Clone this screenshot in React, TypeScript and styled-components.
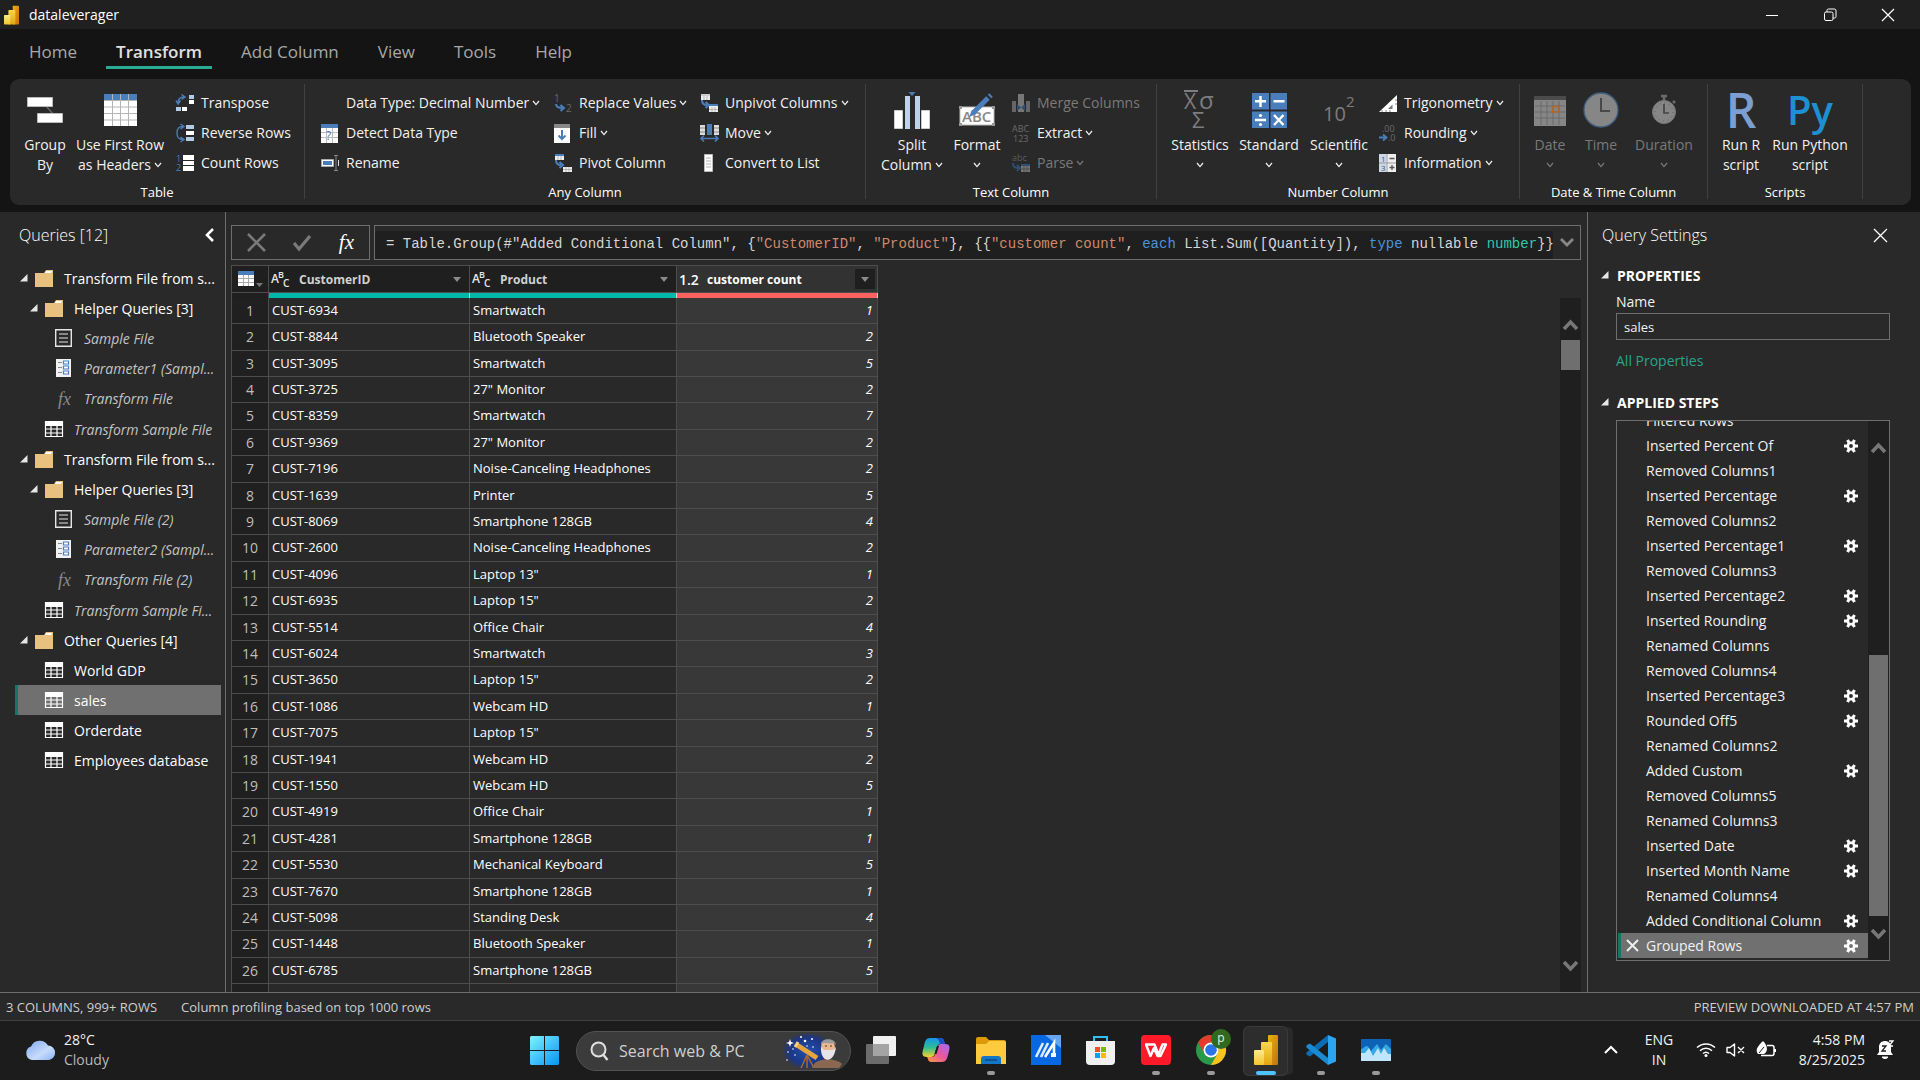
import React from "react";
import styled, { createGlobalStyle } from "styled-components";

const sans = `"Open Sans", "Noto Sans", sans-serif`;
const c = {
  black: "#141414",
  panel: "#292929",
  dark: "#1f1f1f",
  line: "#6e6e6e",
  grid: "#4d4d4d",
  text: "#f2f2f2",
  muted: "#7a7a7a",
  teal: "#01b8aa",
  red: "#fd625e",
  blue: "#4a7ebb",
  selected: "#707070",
  accent: "#117865",
};

const GlobalStyle = createGlobalStyle`
  *, *::before, *::after { box-sizing: border-box; }
  body { margin: 0; background: ${c.black}; font-family: ${sans}; color: ${c.text}; overflow: hidden; }
  button, input { font: inherit; color: inherit; }
  button { border: 0; padding: 0; background: none; cursor: default; }
  svg { display: block; flex: none; overflow: visible; }
`;

const Window = styled.div`
  display: flex;
  flex-direction: column;
  height: 100vh;
`;

/* ---------- title bar and tabs ---------- */

const TitleBar = styled.header`
  display: flex;
  align-items: center;
  gap: 10px;
  height: 29px;
  padding: 0 25px 0 4px;
  background: #202020;
  font-size: 14px;
  color: #fff;
`;
const WindowButtons = styled.div`
  display: flex;
  gap: 44px;
  margin-left: auto;
`;
const Tabs = styled.nav`
  display: flex;
  gap: 19px;
  height: 50px;
  padding: 8px 19px 0;
`;
const Tab = styled.button<{ $on?: boolean }>`
  height: 32px;
  padding: 0 10px;
  font-size: 17px;
  line-height: 30px;
  font-weight: ${(p) => (p.$on ? 600 : 400)};
  color: ${(p) => (p.$on ? "#e0e0e0" : "#a8a8a8")};
  border-bottom: 3px solid ${(p) => (p.$on ? "#2bab94" : "transparent")};
`;

/* ---------- ribbon ---------- */

const Ribbon = styled.section`
  display: flex;
  height: 126px;
  margin: 0 9px 7px 10px;
  padding: 5px 0 6px;
  border-radius: 9px;
  background: ${c.panel};
`;
const Group = styled.div`
  display: flex;
  flex-direction: column;
  border-right: 1px solid #404040;
`;
const GroupBody = styled.div<{ $pad: number }>`
  display: flex;
  flex: none;
  height: 96px;
  padding: 4px 0 0 ${(p) => p.$pad}px;
`;
const GroupTitle = styled.div`
  text-align: center;
  font-size: 13px;
  line-height: 14px;
  padding-top: 5px;
  color: #fff;
`;
const BigButton = styled.button<{ $w: number; $off?: boolean }>`
  display: flex;
  flex-direction: column;
  align-items: center;
  width: ${(p) => p.$w}px;
  padding-top: 3px;
  font-size: 14px;
  line-height: 20px;
  white-space: nowrap;
  color: ${(p) => (p.$off ? c.muted : c.text)};
`;
const BigIcon = styled.span`
  display: flex;
  align-items: center;
  justify-content: center;
  height: 38px;
  margin-bottom: 6px;
`;
const LabelLine = styled.span`
  display: flex;
  align-items: center;
  gap: 3px;
  height: 20px;
`;
const SmallColumn = styled.div<{ $w: number; $pad?: number }>`
  width: ${(p) => p.$w}px;
  padding-left: ${(p) => p.$pad || 0}px;
`;
const SmallButton = styled.button<{ $off?: boolean }>`
  display: flex;
  align-items: center;
  height: 30px;
  font-size: 14px;
  line-height: 20px;
  white-space: nowrap;
  color: ${(p) => (p.$off ? c.muted : c.text)};
`;
const SmallIcon = styled.span`
  width: 25px;
`;
const Letters = styled.span<{ $color: string; $size: number; $weight?: number }>`
  font-family: ${sans};
  font-size: ${(p) => p.$size}px;
  font-weight: ${(p) => p.$weight || 400};
  line-height: 38px;
  color: ${(p) => p.$color};
`;

/* ---------- workspace ---------- */

const Workspace = styled.main`
  display: flex;
  flex: 1;
  min-height: 0;
  background: ${c.panel};
`;
const QueriesPane = styled.aside`
  flex: none;
  width: 226px;
  border-right: 1px solid ${c.line};
`;
const PaneHead = styled.div<{ $left: number; $right: number }>`
  display: flex;
  align-items: center;
  justify-content: space-between;
  height: 46px;
  margin-bottom: 2px;
  padding: 0 ${(p) => p.$right}px 0 ${(p) => p.$left}px;
`;
const PaneTitle = styled.h2`
  margin: 0;
  font-size: 16px;
  font-weight: 300;
  color: #fff;
`;
const Tree = styled.ul`
  list-style: none;
  margin: 0 4px 0 15px;
  padding: 3px 0 0;
`;
const TreeRow = styled.li<{ $level: number; $on?: boolean; $dim?: boolean; $fn?: boolean }>`
  display: grid;
  grid-template-columns: 15px 19px 1fr;
  align-items: center;
  height: ${(p) => (p.$fn ? 31 : 30)}px;
  padding-left: ${(p) => 2 + p.$level * 10}px;
  border-left: 3px solid ${(p) => (p.$on ? c.accent : "transparent")};
  background: ${(p) => (p.$on ? c.selected : "none")};
  color: ${(p) => (p.$dim ? "#c4c4c4" : "#fff")};
  font-style: ${(p) => (p.$dim ? "italic" : "normal")};
  font-size: 14px;
`;
const TreeName = styled.span`
  padding-left: 10px;
  white-space: nowrap;
`;

const Center = styled.section`
  display: flex;
  flex: 1;
  flex-direction: column;
  min-width: 0;
  padding: 13px 6px 0 5px;
`;
const FormulaRow = styled.div`
  display: flex;
  gap: 4px;
  height: 35px;
  margin-bottom: 5px;
`;
const FormulaTools = styled.div`
  display: flex;
  align-items: center;
  justify-content: space-between;
  width: 139px;
  padding: 0 15px;
  border: 1px solid ${c.line};
`;
const FormulaBox = styled.div`
  display: flex;
  flex: 1;
  min-width: 0;
  border: 1px solid ${c.line};
`;
const FormulaText = styled.div`
  flex: 1;
  margin-top: 5px;
  padding-left: 11px;
  overflow: hidden;
  background: ${c.dark};
  font: 14px/26px "Liberation Mono", monospace;
  white-space: pre;
  color: #d6d6d6;
  outline: 0;
`;
const Token = styled.span<{ $color: string }>`
  color: ${(p) => p.$color};
`;
const ExpandButton = styled.button`
  display: grid;
  place-items: center;
  width: 27px;
`;
const GridArea = styled.div`
  display: flex;
  flex: 1;
  justify-content: space-between;
  min-height: 0;
`;
const GridClip = styled.div`
  overflow: hidden;
`;
const Table = styled.table`
  border-collapse: separate;
  border-spacing: 0;
  table-layout: fixed;
  width: 647px;
  border-top: 1px solid ${c.grid};
  border-left: 1px solid ${c.grid};
  font-size: 13px;
  font-weight: 500;
`;
const Head = styled.th<{ $w: number; $on?: boolean }>`
  width: ${(p) => p.$w}px;
  height: 27px;
  padding: 0 2px;
  border-right: 1px solid ${c.grid};
  border-bottom: 1px solid ${c.grid};
  background: ${(p) => (p.$on ? "#323232" : c.dark)};
  color: ${(p) => (p.$on ? "#fff" : "#d0d0d0")};
  font-size: 12px;
  text-align: left;
`;
const HeadInner = styled.div`
  display: flex;
  align-items: center;
  gap: 8px;
`;
const FilterButton = styled.button<{ $on?: boolean }>`
  display: grid;
  place-items: center;
  width: 20px;
  height: 20px;
  margin-left: auto;
  background: ${(p) => (p.$on ? c.dark : "none")};
`;
const Quality = styled.td<{ $color: string }>`
  height: 5px;
  padding: 0;
  background: ${(p) => p.$color};
  border-right: 1px solid #d0d0d0;
  &:first-child { border-right-color: ${c.grid}; }
`;
const BodyRow = styled.tr`
  height: 26px;
  &:nth-child(5n + 1), &:nth-child(5n + 3) { height: 27px; }
`;
const Cell = styled.td<{ $num?: boolean }>`
  padding: 0 4px 2px 3px;
  border-right: 1px solid ${c.grid};
  border-bottom: 1px solid ${c.grid};
  background: ${(p) => (p.$num ? "#383838" : c.panel)};
  font-style: ${(p) => (p.$num ? "italic" : "normal")};
  text-align: ${(p) => (p.$num ? "right" : "left")};
  line-height: 16px;
  color: #fff;
`;
const RowNumber = styled.th`
  padding: 0;
  border-right: 1px solid ${c.grid};
  border-bottom: 1px solid ${c.grid};
  background: #202020;
  font-size: 14px;
  font-weight: 400;
  line-height: 18px;
  color: #bfbfbf;
`;
const Track = styled.div<{ $top: number }>`
  display: flex;
  flex: none;
  flex-direction: column;
  align-items: center;
  width: 21px;
  margin-top: ${(p) => p.$top}px;
  padding: 21px 1px 20px;
  background: ${c.dark};
`;
const Gap = styled.div<{ $grow: number }>`
  flex: ${(p) => p.$grow} 0 0;
`;
const Thumb = styled.div<{ $grow?: number }>`
  width: 100%;
  min-height: 30px;
  margin-top: 9px;
  flex: ${(p) => p.$grow || 0} 0 auto;
  background: #6f6f6f;
`;

const Settings = styled.aside`
  display: flex;
  flex: none;
  flex-direction: column;
  width: 333px;
  padding-bottom: 31px;
  border-left: 1px solid ${c.line};
`;
const SectionHead = styled.button`
  display: flex;
  align-items: center;
  gap: 8px;
  height: 30px;
  padding-left: 13px;
  font-size: 14px;
  font-weight: 700;
  color: #fff;
`;
const Fields = styled.div`
  display: flex;
  flex-direction: column;
  margin: 0 30px 0 28px;
  font-size: 14px;
  line-height: 23px;
`;
const NameInput = styled.input`
  height: 27px;
  padding: 0 7px;
  border: 1px solid ${c.line};
  background: none;
  font-size: 13px;
  outline: 0;
`;
const Link = styled.a`
  align-self: flex-start;
  margin: 11px 0 16px;
  line-height: 20px;
  color: #27a688;
  text-decoration: none;
`;
const StepsBox = styled.div`
  display: flex;
  flex: 1;
  min-height: 0;
  margin: 3px 30px 0 28px;
  border: 1px solid ${c.line};
`;
const Steps = styled.ol`
  display: flex;
  flex: 1;
  flex-direction: column;
  justify-content: flex-end;
  margin: 0;
  padding: 0 0 2px 1px;
  overflow: hidden;
  list-style: none;
  font-size: 14px;
`;
const Step = styled.li<{ $on?: boolean }>`
  display: grid;
  grid-template-columns: 25px 1fr 24px;
  flex: none;
  align-items: center;
  height: 25px;
  border-left: 3px solid ${(p) => (p.$on ? c.accent : "transparent")};
  background: ${(p) => (p.$on ? c.selected : "none")};
  white-space: nowrap;
`;
const DeleteSlot = styled.span`
  padding-left: 5px;
`;

/* ---------- status bar and taskbar ---------- */

const StatusBar = styled.footer`
  display: flex;
  align-items: center;
  gap: 24px;
  height: 29px;
  padding: 0 6px;
  border-top: 1px solid ${c.line};
  border-bottom: 1px solid #3f3f3f;
  background: ${c.panel};
  font-size: 13px;
  color: #cfcfcf;
`;
const StatusRight = styled.span`
  margin-left: auto;
`;
const Taskbar = styled.footer`
  display: grid;
  grid-template-columns: 1fr auto 1fr;
  height: 59px;
  padding: 0 26px 0 25px;
  background: #1c1c1c;
`;
const Weather = styled.button`
  display: flex;
  align-items: center;
  justify-self: start;
  gap: 8px;
  padding-bottom: 2px;
  font-size: 14px;
  line-height: 20px;
  text-align: left;
`;
const Dim = styled.span`
  color: #b8b8b8;
`;
const Stack = styled.span<{ $align: string }>`
  display: flex;
  flex-direction: column;
  align-items: ${(p) => p.$align};
`;
const Apps = styled.div`
  display: flex;
  align-items: center;
  padding-left: 14px;
`;
const StartButton = styled.button`
  margin-right: 17px;
`;
const Search = styled.label`
  display: flex;
  align-items: center;
  justify-content: space-between;
  width: 275px;
  height: 40px;
  margin-right: 2px;
  padding: 0 7px 0 13px;
  border: 1px solid #525252;
  border-radius: 20px;
  background: #3b3b3b;
`;
const SearchInput = styled.input`
  flex: 1;
  min-width: 0;
  margin-left: 8px;
  border: 0;
  background: none;
  font-size: 16px;
  outline: 0;
  &::placeholder { color: #cfcfcf; opacity: 1; }
`;
const AppButton = styled.button<{ $on?: boolean }>`
  display: grid;
  grid-template-rows: 1fr 6px;
  place-items: center;
  position: relative;
  width: 45px;
  height: 50px;
  margin: 0 5px;
  padding-top: 5px;
  border-radius: 6px;
  background: ${(p) => (p.$on ? "#2d2d2d" : "none")};
  box-shadow: ${(p) => (p.$on ? "inset 0 0 0 1px #3a3a3a, 6px 0 0 -1px #292929" : "none")};
`;
const Running = styled.span<{ $on?: boolean }>`
  width: ${(p) => (p.$on ? 20 : 8)}px;
  height: 4px;
  border-radius: 2px;
  background: ${(p) => (p.$on ? "#4cc2ff" : "#9a9a9a")};
`;
const ProfileBadge = styled.span`
  position: absolute;
  top: 3px;
  right: 2px;
  width: 20px;
  height: 20px;
  border-radius: 50%;
  background: #33691e;
  font-size: 12px;
  line-height: 18px;
  text-align: center;
  color: #e8f0e4;
`;
const Tray = styled.div`
  display: flex;
  align-items: center;
  justify-self: end;
  padding-bottom: 2px;
  font-size: 14px;
  line-height: 20px;
`;
const TrayIcons = styled.span`
  display: flex;
  align-items: center;
  gap: 10px;
  margin: 0 20px 0 22px;
`;
const Clock = styled.button`
  width: 69px;
  display: flex;
  justify-content: flex-end;
  margin-right: 12px;
  white-space: nowrap;
  line-height: 20px;
`;
const Lang = styled.button`
  width: 30px;
  margin-left: 26px;
`;

/* ---------- drawings ---------- */

const Svg = ({ w, h, children }: { w: number; h: number; children: React.ReactNode }) => (
  <svg width={w} height={h} viewBox={`0 0 ${w} ${h}`} fill="none" aria-hidden="true">{children}</svg>
);
const Caret = () => <Svg w={8} h={6}><path d="M1 1l3 3.6L7 1" stroke="currentColor" strokeWidth="1.2" /></Svg>;
const PowerBi = ({ w = 15, h = 20 }) => (
  <svg width={w} height={h} viewBox="0 0 24 30" aria-hidden="true">
    <defs>
      <linearGradient id="pa" x1="0" y1="0" x2="1" y2="1"><stop stopColor="#e9b20e" /><stop offset="1" stopColor="#c4710d" /></linearGradient>
      <linearGradient id="pb" x1="0" y1="0" x2="0" y2="1"><stop stopColor="#f8d84a" /><stop offset="1" stopColor="#e2a512" /></linearGradient>
      <linearGradient id="pc" x1="0" y1="0" x2="0" y2="1"><stop stopColor="#fbe98e" /><stop offset="1" stopColor="#f3c62c" /></linearGradient>
    </defs>
    <rect x="14" width="10" height="30" rx="1" fill="url(#pa)" />
    <rect x="7" y="7" width="11" height="23" rx="1" fill="url(#pb)" />
    <rect y="15" width="10" height="15" rx="1" fill="url(#pc)" />
  </svg>
);
const Triangle = () => <Svg w={8} h={8}><path d="M7.500 0v7.500H0z" fill="#e6e6e6" /></Svg>;
const Folder = () => (
  <Svg w={18} h={17}><path d="M0 3h9l2-3h7v17H0z" fill="#e8c17e" /><path d="M11 1h6l-1 2h-6z" fill="#fff" /></Svg>
);
const TableIcon = () => (
  <Svg w={18} h={16}><path d="M.5.5h17v15H.5zM.5 8h17M.5 12h17M6 4v12M12 4v12" stroke="#fff" strokeWidth="1.200" /><path d="M0 0h18v5H0z" fill="#fff" /></Svg>
);
const ListIcon = () => (
  <Svg w={17} h={18}><path d="M.7.7h15.600v16.600H.7z" stroke="#e6e6e6" strokeWidth="1.400" /><path d="M4 5h9M4 9h9M4 13h9" stroke="#e6e6e6" /></Svg>
);
const ParamIcon = () => (
  <Svg w={17} h={18}><path d="M1 0h15v18H1z" fill="#f2f2f2" /><path d="M3 3.500h4M3 8.500h4M3 13.500h4" stroke="#888" /><path d="M8.500 2h5v3h-5zM8.500 7h5v3h-5zM8.500 12h5v3h-5z" stroke={c.blue} fill="#fff" strokeWidth="1.200" /></Svg>
);
const FxMark = styled.i<{ $color: string; $size: number }>`
  font-family: "Liberation Serif", serif;
  font-size: ${(p) => p.$size}px;
  line-height: 20px;
  color: ${(p) => p.$color};
  text-align: center;
`;
const Gear = ({ hole = c.panel }: { hole?: string }) => (
  <Svg w={14} h={14}>
    <g stroke="#fff" strokeWidth="3"><path d="M7 0v14" transform="rotate(30 7 7)" /><path d="M0 7h14" /><path d="M7 0v14" transform="rotate(-30 7 7)" /></g>
    <circle cx="7" cy="7" r="4.600" fill="#fff" /><circle cx="7" cy="7" r="1.900" fill={hole} />
  </Svg>
);
const Cross = ({ s, color, w = 1.5 }: { s: number; color: string; w?: number }) => (
  <Svg w={s} h={s}><path d={`M1 1L${s - 1} ${s - 1}M${s - 1} 1L1 ${s - 1}`} stroke={color} strokeWidth={w} /></Svg>
);
const ScrollArrow = ({ down }: { down?: boolean }) => (
  <Svg w={15} h={12}><path d={down ? "M1 2l6.500 7L14 2" : "M1 10l6.500-7L14 10"} stroke="#777" strokeWidth="3.500" /></Svg>
);
const FilterMark = () => <Svg w={8} h={5}><path d="M0 0h8L4 5z" fill="#8a8a8a" /></Svg>;
const TextType = () => (
  <svg width="20" height="18" viewBox="0 0 20 18" aria-hidden="true" fill="#e6e6e6" fontFamily="Open Sans" fontWeight="600">
    <text x="0" y="13" fontSize="12">A</text><text x="7" y="8" fontSize="9">B</text><text x="12" y="17" fontSize="10">C</text>
  </svg>
);
const NumberType = styled.span`
  width: 20px;
  font-size: 14px;
  font-weight: 600;
`;

const GroupByIcon = () => (
  <Svg w={37} h={26}><path d="M19 9l8 9" stroke="#666" strokeWidth="1.500" /><path d="M.5.5h25v9H.5zM10.500 16.500h25v9h-25z" fill="#fff" stroke="#bbb" /></Svg>
);
const HeaderTable = () => (
  <Svg w={33} h={32}><path d="M0 0h33v32H0z" fill="#fff" /><path d="M0 0h33v6.500H0z" fill={c.blue} /><path d="M8.500 0v32M16.500 0v32M24.500 0v32M0 6.500h33M0 13h33M0 19.500h33M0 26h33" stroke="#b5b5b5" /></Svg>
);
const TransposeIcon = () => (
  <Svg w={19} h={18}><path d="M2 9c0-4 2-6 6-6M5.500.5L9 3 5.500 5.500M0 6.500L2 10l2.500-3.500" stroke={c.blue} strokeWidth="1.500" /><path d="M13 1h5v4h-5z" fill="#b4cbe6" /><path d="M13 6h5v4h-5zM6 13h5v4H6z" fill="#fff" /><path d="M0 13h5v4H0z" fill="#b4cbe6" /></Svg>
);
const ReverseIcon = () => (
  <Svg w={19} h={18}><path d="M7 2.500C2 2.500 1 5 1 9s1 6.500 6 6.500M4.500 0L8 2.500 4.500 5M4.500 13L8 15.500 4.500 18" stroke={c.blue} strokeWidth="1.400" /><path d="M10 1h8v4h-8zM10 13h8v4h-8z" fill="#b4cbe6" /><path d="M10 7h8v4h-8z" fill="#fff" /></Svg>
);
const CountIcon = () => (
  <Svg w={19} h={18}><g fill={c.blue} fontSize="9" fontFamily="Open Sans"><text y="8">1</text><text y="17">2</text></g><path d="M7 1h11v5H7zM7 7h11v4H7zM7 12h11v5H7z" fill="#fff" /></Svg>
);
const DetectIcon = () => (
  <Svg w={17} h={19}><path d="M0 0h17v19H0z" fill="#fff" /><path d="M0 0h17v4H0z" fill={c.blue} /><path d="M5.500 4v15M11.500 4v15M0 8.500h17M0 13.500h17" stroke="#bbb" /><text x="5" y="16" fontSize="12" fill={c.blue} fontFamily="Open Sans">?</text></Svg>
);
const RenameIcon = () => (
  <Svg w={19} h={16}><path d="M.5 4.500h12v7H.5z" fill="#fff" stroke="#aaa" /><path d="M2 6h9v4H2z" fill={c.blue} /><path d="M15 1v14M13 .5h4M13 15.500h4" stroke="#888" /><path d="M17.500 5v6" stroke="#ddd" /></Svg>
);
const ReplaceIcon = () => (
  <Svg w={19} h={18}><g fill="#6a6a6a" fontSize="10" fontFamily="Open Sans"><text y="8">1</text><text x="12" y="18">2</text></g><path d="M2 10c0 3 2 4 7 4M6.500 11l3.500 3-3.500 3" stroke={c.blue} strokeWidth="2" /></Svg>
);
const FillIcon = () => (
  <Svg w={16} h={19}><path d="M0 0h16v19H0z" fill="#fff" /><path d="M0 0h16v4H0z" fill="#888" /><path d="M8 6v9M4.500 11.500L8 15l3.500-3.500" stroke={c.blue} strokeWidth="2" /></Svg>
);
const PivotIcon = ({ flip }: { flip?: boolean }) => (
  <Svg w={19} h={18}>
    <path d="M1 0h9v6H1z" fill="#eee" /><path d="M1 0h9v2H1z" fill={flip ? "#ccc" : c.blue} />
    <path d="M2 6c0 4 2 5 5 5M5.500 8L9 11l-3.500 3" stroke={c.blue} strokeWidth="2" />
    <path d={flip ? "M9 10h9v8H9z" : "M9 13h9v5H9z"} fill="#eee" />
    {flip && <path d="M9 10h9v2H9z" fill={c.blue} />}
    <path d="M12 13v5M15 13v5M9 15.500h9M4 2v4M7 2v4" stroke="#999" strokeWidth=".6" />
  </Svg>
);
const MoveIcon = () => (
  <Svg w={19} h={18}><path d="M0 1h5v10H0zM14 1h5v10h-5z" fill="#ddd" /><path d="M0 4h5M0 8h5M14 4h5M14 8h5" stroke="#888" /><path d="M7 0h5v11H7z" fill={c.blue} /><path d="M1 14.500h17M4 11.500L1 14.500l3 3M15 11.500l3 3-3 3" stroke={c.blue} strokeWidth="1.600" /></Svg>
);
const ListColumnIcon = () => (
  <Svg w={17} h={18}><path d="M4.500.5h8v17h-8z" fill="#fff" stroke="#bbb" /><path d="M6 4h5M6 7h5M6 10h5M6 13h5" stroke="#b0b0b0" /></Svg>
);
const SplitIcon = () => (
  <Svg w={36} h={37}><path d="M.5 18.500h8v18h-8zM27.500 18.500h8v18h-8z" fill="#fff" stroke="#ccc" /><path d="M11 4h5v33h-5zM21 4h5v33h-5z" fill="#bed3ea" /><path d="M14.500 0h7L18 4z" fill={c.blue} /></Svg>
);
const FormatIcon = () => (
  <Svg w={36} h={32}><path d="M1 13h34v18H1z" fill="#fff" stroke="#bbb" /><path d="M0 12h3v3H0zM33 12h3v3h-3zM0 29h3v3H0zM33 29h3v3h-3z" fill="#999" /><text x="3" y="28" fontSize="15" fill="#888" fontFamily="Open Sans" fontWeight="600">ABC</text><path d="M10 23l3-7 4 4z" fill={c.blue} /><path d="M14 19L29 4" stroke={c.blue} strokeWidth="5" /><path d="M30.500 2.500l1.500-1.500" stroke={c.blue} strokeWidth="5" /></Svg>
);
const MergeIcon = () => (
  <Svg w={18} h={18}><path d="M0 7h4v11H0zM14 7h4v11h-4z" fill="#666" /><path d="M6 0h6v18H6z" fill="#777" /><path d="M5 10l4 3.500L5 17zM13 10l-4 3.500L13 17z" fill="#304f73" /></Svg>
);
const ExtractIcon = () => (
  <Svg w={18} h={18}><g fill="#6b6b6b" fontSize="9" fontFamily="Open Sans"><text y="8">ABC</text><text x="1" y="18">123</text></g></Svg>
);
const ParseIcon = () => (
  <Svg w={18} h={18}><text y="7" fill="#5b5b5b" fontSize="9" fontFamily="Open Sans">abc</text><path d="M1 9c0 4 2 5 5 5M5 11l3 3-3 3" stroke="#304f73" strokeWidth="1.800" /><path d="M9 10h9v8H9z" fill="#777" /><path d="M9 10h9v2H9z" fill="#304f73" /><path d="M12 12v6M15 12v6M9 15h9" stroke="#444" strokeWidth=".7" /></Svg>
);
const StatsIcon = () => (
  <Svg w={34} h={38}><g fill="#7d7d7d" fontFamily="Open Sans"><text x="1" y="18" fontSize="21">X</text><text x="16" y="18" fontSize="24">σ</text><text x="9" y="37" fontSize="22">Σ</text></g><path d="M1 0h14" stroke="#7d7d7d" strokeWidth="2" /></Svg>
);
const StandardIcon = () => (
  <Svg w={35} h={35}><path d="M0 0h17v16.500H0zM18.500 0h16.500v16.500H18.500zM0 18.500h17V35H0zM18.500 18.500h16.500V35H18.500z" fill={c.blue} /><path d="M3 8.300h11M8.500 3v11M21.500 8.300h11M3 27h11M22 22l9.500 10M31.500 22L22 32" stroke="#fff" strokeWidth="2.400" /><circle cx="8.500" cy="22.500" r="1.600" fill="#fff" /><circle cx="8.500" cy="31.500" r="1.600" fill="#fff" /></Svg>
);
const SciIcon = () => (
  <Svg w={32} h={32}><g fill="#7d7d7d" fontFamily="Open Sans"><text y="27" fontSize="20">10</text><text x="23" y="13" fontSize="15">2</text></g></Svg>
);
const TrigIcon = () => (
  <Svg w={18} h={17}><path d="M18 0v17H0z" fill="#fff" /><path d="M13.500 9.500v4.500H9z" fill="#777" /><path d="M3 17v-2M7 17v-2M11 17v-2M18 5h-2M18 9h-2" stroke="#888" /></Svg>
);
const RoundIcon = () => (
  <Svg w={18} h={18}><g fill="#6b6b6b" fontSize="9" fontFamily="Open Sans"><text x="3" y="8">.00</text><text x="9" y="17">.0</text></g><path d="M0 13.500h7M4 10.500l3.500 3-3.500 3" stroke={c.blue} strokeWidth="1.800" /></Svg>
);
const InfoIcon = () => (
  <Svg w={17} h={18}><path d="M0 0h17v18H0z" fill="#eee" /><path d="M0 0h7v18H0z" fill="#c8d8ea" /><path d="M8 0v18M0 9h17" stroke="#999" /><path d="M10.500 4.500h5M10.500 13.500h5M13 11v5" stroke="#555" strokeWidth="1.300" /><g fill="#555" fontSize="8" fontFamily="Open Sans"><text x="2" y="8">1</text><text x="2" y="17">3</text></g></Svg>
);
const DateIcon = () => (
  <Svg w={32} h={31}><path d="M0 1h32v30H0z" fill="#868686" /><path d="M0 1h32v4H0z" fill="#4b4b4b" /><path d="M1 11h30M1 17h30M1 23h30M7 6v24M13 6v24M19 6v24M25 6v24" stroke="#6a6a6a" /><path d="M18.500 11.500h6v5.500h-6z" stroke="#b5652c" strokeWidth="1.400" /></Svg>
);
const TimeIcon = () => (
  <Svg w={36} h={36}><circle cx="18" cy="18" r="17" fill="#868686" stroke="#40607f" strokeWidth="1.300" /><path d="M18 6v13h9" stroke="#484848" strokeWidth="2" /></Svg>
);
const DurationIcon = () => (
  <Svg w={26} h={30}><path d="M10 1h6M13 1v5M22 6l2 2" stroke="#6b6b6b" strokeWidth="2.500" /><circle cx="13" cy="17" r="11.500" fill="#868686" stroke="#777" /><circle cx="13" cy="17" r="9" stroke="#5a5a5a" strokeDasharray="1 3.700" /><path d="M13 9v9h5" stroke="#444" strokeWidth="1.700" /></Svg>
);

/* ---------- data ---------- */

const rows: [string, string, number][] = [
  ["CUST-6934", "Smartwatch", 1], ["CUST-8844", "Bluetooth Speaker", 2], ["CUST-3095", "Smartwatch", 5],
  ["CUST-3725", '27" Monitor', 2], ["CUST-8359", "Smartwatch", 7], ["CUST-9369", '27" Monitor', 2],
  ["CUST-7196", "Noise-Canceling Headphones", 2], ["CUST-1639", "Printer", 5], ["CUST-8069", "Smartphone 128GB", 4],
  ["CUST-2600", "Noise-Canceling Headphones", 2], ["CUST-4096", 'Laptop 13"', 1], ["CUST-6935", 'Laptop 15"', 2],
  ["CUST-5514", "Office Chair", 4], ["CUST-6024", "Smartwatch", 3], ["CUST-3650", 'Laptop 15"', 2],
  ["CUST-1086", "Webcam HD", 1], ["CUST-7075", 'Laptop 15"', 5], ["CUST-1941", "Webcam HD", 2],
  ["CUST-1550", "Webcam HD", 5], ["CUST-4919", "Office Chair", 1], ["CUST-4281", "Smartphone 128GB", 1],
  ["CUST-5530", "Mechanical Keyboard", 5], ["CUST-7670", "Smartphone 128GB", 1], ["CUST-5098", "Standing Desk", 4],
  ["CUST-1448", "Bluetooth Speaker", 1], ["CUST-6785", "Smartphone 128GB", 5], ["CUST-2210", 'Laptop 15"', 2],
];

type Kind = "folder" | "list" | "param" | "fn" | "table";
const tree: { level: number; kind: Kind; name: string; dim?: boolean; on?: boolean }[] = [
  { level: 0, kind: "folder", name: "Transform File from s..." },
  { level: 1, kind: "folder", name: "Helper Queries [3]" },
  { level: 2, kind: "list", name: "Sample File", dim: true },
  { level: 2, kind: "param", name: "Parameter1 (Sampl...", dim: true },
  { level: 2, kind: "fn", name: "Transform File", dim: true },
  { level: 1, kind: "table", name: "Transform Sample File", dim: true },
  { level: 0, kind: "folder", name: "Transform File from s..." },
  { level: 1, kind: "folder", name: "Helper Queries [3]" },
  { level: 2, kind: "list", name: "Sample File (2)", dim: true },
  { level: 2, kind: "param", name: "Parameter2 (Sampl...", dim: true },
  { level: 2, kind: "fn", name: "Transform File (2)", dim: true },
  { level: 1, kind: "table", name: "Transform Sample Fi...", dim: true },
  { level: 0, kind: "folder", name: "Other Queries [4]" },
  { level: 1, kind: "table", name: "World GDP" },
  { level: 1, kind: "table", name: "sales", on: true },
  { level: 1, kind: "table", name: "Orderdate" },
  { level: 1, kind: "table", name: "Employees database" },
];
const kindIcon: Record<Kind, React.ReactNode> = {
  folder: <Folder />,
  list: <ListIcon />,
  param: <ParamIcon />,
  fn: <FxMark $color="#8a8a8a" $size={18}>fx</FxMark>,
  table: <TableIcon />,
};

const steps: [string, boolean][] = [
  ["Filtered Rows", false], ["Inserted Percent Of", true], ["Removed Columns1", false], ["Inserted Percentage", true],
  ["Removed Columns2", false], ["Inserted Percentage1", true], ["Removed Columns3", false], ["Inserted Percentage2", true],
  ["Inserted Rounding", true], ["Renamed Columns", false], ["Removed Columns4", false], ["Inserted Percentage3", true],
  ["Rounded Off5", true], ["Renamed Columns2", false], ["Added Custom", true], ["Removed Columns5", false],
  ["Renamed Columns3", false], ["Inserted Date", true], ["Inserted Month Name", true], ["Renamed Columns4", false],
  ["Added Conditional Column", true], ["Grouped Rows", true],
];

type BigProps = { icon: React.ReactNode; a: string; b?: string; caret?: boolean; w: number; off?: boolean };
const Big = ({ icon, a, b, caret, w, off }: BigProps) => (
  <BigButton $w={w} $off={off}>
    <BigIcon>{icon}</BigIcon>
    <LabelLine>{a}</LabelLine>
    <LabelLine>{b}{caret && <Caret />}</LabelLine>
  </BigButton>
);
const Small = ({ icon, label, caret, off }: { icon?: React.ReactNode; label: string; caret?: boolean; off?: boolean }) => (
  <SmallButton $off={off}>
    <SmallIcon>{icon}</SmallIcon>
    <LabelLine>{label}{caret && <Caret />}</LabelLine>
  </SmallButton>
);

/* ---------- taskbar drawings ---------- */

const WindowsLogo = () => (
  <svg width="29" height="29" viewBox="0 0 29 29" aria-hidden="true">
    <defs><linearGradient id="wl" x1="0" y1="0" x2="29" y2="29" gradientUnits="userSpaceOnUse"><stop stopColor="#7df3ff" /><stop offset="1" stopColor="#0a93f5" /></linearGradient></defs>
    <path d="M1 0h13v14H0V1zM15 0h13l1 1v13H15zM0 15h14v14H1l-1-1zM15 15h14v13l-1 1H15z" fill="url(#wl)" />
  </svg>
);
const SearchArt = () => (
  <svg width="60" height="34" viewBox="0 0 60 34" aria-hidden="true">
    <defs><radialGradient id="sky"><stop stopColor="#2450ad" /><stop offset=".7" stopColor="#1b3686" /><stop offset="1" stopColor="#1b3686" stopOpacity="0" /></radialGradient><clipPath id="artclip"><path d="M0 0h60v17a17 17 0 0 1-4 17H0z" /></clipPath></defs>
    <g clipPath="url(#artclip)">
      <ellipse cx="25" cy="17" rx="26" ry="19" fill="url(#sky)" />
      <g fill="#fff"><path d="M7 5l1 3 3 1-3 1-1 3-1-3-3-1 3-1z" /><circle cx="18" cy="3" r="1" /><circle cx="22" cy="7" r="1.300" /><circle cx="29" cy="5" r="1" /><circle cx="5" cy="18" r=".8" /><circle cx="12" cy="21" r=".8" /><circle cx="30" cy="13" r=".8" /><circle cx="10" cy="15" r=".8" /><circle cx="4" cy="26" r=".8" /><circle cx="24" cy="12" r=".8" /></g>
      <path d="M14 11l20 13" stroke="#e6a63c" strokeWidth="5" /><path d="M15 8l-3 5" stroke="#f6cf78" strokeWidth="3" />
      <path d="M24 21l-6 13M24 21v13M24 21l7 13" stroke="#a9682a" strokeWidth="1.500" />
      <path d="M29 34c2-7 8-8 16-9 8 1 13 3 15 6l-3 3z" fill="#8b6650" />
      <circle cx="45" cy="13" r="7" fill="#eab795" /><path d="M38 11c-1-7 14-8 15 0l-2-2c-4 1-8 0-11 0z" fill="#999" />
      <path d="M38 13c-1 16 13 18 15 0l-3 3h-9z" fill="#e5e5e5" />
      <path d="M42 12h2M47 12h2" stroke="#4b3426" />
    </g>
  </svg>
);
const TaskView = () => (
  <Svg w={30} h={28}><path d="M8 0h21a1 1 0 0 1 1 1v18a1 1 0 0 1-1 1H8a1 1 0 0 1-1-1V1a1 1 0 0 1 1-1z" fill="#f0f0f0" /><rect y="8" width="23" height="20" rx="1" fill="#6c6c6c" /><path d="M7 8h16v12H7z" fill="#a4a4a4" /></Svg>
);
const Copilot = () => (
  <svg width="28" height="26" viewBox="0 0 28 26" aria-hidden="true" fill="none">
    <defs>
      <linearGradient id="ca" x1="0" y1="0" x2="0" y2="1"><stop stopColor="#1894ec" /><stop offset=".5" stopColor="#2dbd93" /><stop offset="1" stopColor="#f6d22c" /></linearGradient>
      <linearGradient id="cb" x1="1" y1="0" x2="0" y2="1"><stop stopColor="#a66cf5" /><stop offset=".5" stopColor="#e7569f" /><stop offset="1" stopColor="#f99b3d" /></linearGradient>
    </defs>
    <path d="M8 1h11c3 0 3 4 4 6h-5c-2 0-3 2-4 5l-1 4c-1 3-2 4-4 4H5c-6 0-5-4-3-11C3 4 4 1 8 1z" fill="url(#ca)" />
    <path d="M14 1h5c2 0 3 2 4 6h-5c-1-3-1-5-4-6z" fill="#1b4fc6" />
    <path d="M20 25H9c-3 0-3-4-4-5h5c2 0 3-2 4-5l1-4c1-3 2-4 4-4h4c6 0 5 4 3 11-1 4-2 7-6 7z" fill="url(#cb)" />
    <path d="M12.500 17L15 9h2l-2.500 8z" fill="#1c1c1c" />
  </svg>
);
const Explorer = () => (
  <Svg w={30} h={27}><path d="M0 2a2 2 0 0 1 2-2h8l3 3h15a2 2 0 0 1 2 2v5H0z" fill="#dc9a08" /><path d="M0 7h10l3-3h15a2 2 0 0 1 2 2v21H0z" fill="#fecb3e" /><path d="M5 27v-5a3 3 0 0 1 3-3h14a3 3 0 0 1 3 3v5z" fill="#1476c6" /><path d="M9 23h12" stroke="#0a4a85" strokeWidth="1.500" /></Svg>
);
const MyAsus = () => (
  <Svg w={30} h={30}><path d="M0 0h30v30H0z" fill="#0868e4" /><path d="M14 0h16v13z" fill="#69a5ef" /><path d="M5 22L12 8M10 22L17 8" stroke="#dcebff" strokeWidth="2.600" /><path d="M14 22L23 8v10" stroke="#fff" strokeWidth="2.600" /><path d="M20 18h5v4h-5z" fill="#fff" /></Svg>
);
const Store = () => (
  <Svg w={29} h={29}><path d="M8 7V1h13v6" stroke="#36bdf1" strokeWidth="2" /><path d="M0 5h29v20a4 4 0 0 1-4 4H4a4 4 0 0 1-4-4z" fill="#f0f0f0" /><path d="M9 11h5v5H9z" fill="#f25022" /><path d="M15 11h5v5h-5z" fill="#7fba00" /><path d="M9 17h5v5H9z" fill="#00a4ef" /><path d="M15 17h5v5h-5z" fill="#ffb900" /></Svg>
);
const Wps = () => (
  <Svg w={30} h={30}><rect width="30" height="30" rx="4" fill="#ff1a2a" /><path d="M4 9.500h9.500l4 10 4-10H25l-5.500 11.500h-3L13 13l-3.500 8L5 9.500" stroke="#fff" strokeWidth="2.400" strokeLinejoin="round" /></Svg>
);
const Chrome = () => (
  <Svg w={30} h={30}><circle cx="15" cy="15" r="15" fill="#2a9a48" /><path d="M2 7.500A15 15 0 0 1 28 7.500H15a7.500 7.500 0 0 0-6.500 11z" fill="#e33b2e" /><path d="M28 7.500A15 15 0 0 1 15 30l6.500-11.300A7.500 7.500 0 0 0 15 7.500z" fill="#fcc31e" /><circle cx="15" cy="15" r="7.500" fill="#fff" /><circle cx="15" cy="15" r="5.800" fill="#2b74ea" /></Svg>
);
const VsCode = () => (
  <Svg w={30} h={30}><path d="M22 7L4 21.500 1 20c-1-1-1-2 0-3L22 0z" fill="#0c6cb4" /><path d="M22 23L4 8.500 1 10c-1 1-1 2 0 3l21 17z" fill="#1a8ad2" /><path d="M22 0l8 3.500v23L22 30z" fill="#2ba5f0" /></Svg>
);
const Monitor = () => (
  <Svg w={30} h={22}><rect width="30" height="22" rx="1" fill="#0d62b6" /><path d="M0 10c3 0 5-6 8-1l2 3 6-7 4 6 5-6 5 5v12H0z" fill="#38a8e5" /><path d="M0 14h4l4-5 4 8 5-8 3 6 3-6 4 6h3v7H0z" fill="#bfe6fb" /></Svg>
);
const Cloud = () => (
  <svg width="31" height="20" viewBox="0 0 31 20" aria-hidden="true"><defs><linearGradient id="cl" x1="0" y1="0" x2="1" y2="1"><stop stopColor="#7ea6f2" /><stop offset=".6" stopColor="#c8dcfb" /><stop offset="1" stopColor="#88b0f4" /></linearGradient></defs><path d="M7 20a7 7 0 0 1-1-13.500A9.500 9.500 0 0 1 23 5.500 7.300 7.300 0 0 1 24 20z" fill="url(#cl)" /></svg>
);

const apps: { name: string; icon: React.ReactNode; run?: boolean; on?: boolean; badge?: string }[] = [
  { name: "Task View", icon: <TaskView /> },
  { name: "Copilot", icon: <Copilot /> },
  { name: "File Explorer", icon: <Explorer />, run: true },
  { name: "MyASUS", icon: <MyAsus /> },
  { name: "Store", icon: <Store /> },
  { name: "WPS Office", icon: <Wps />, run: true },
  { name: "Chrome", icon: <Chrome />, run: true, badge: "p" },
  { name: "Power BI", icon: <PowerBi w={24} h={30} />, run: true, on: true },
  { name: "Visual Studio Code", icon: <VsCode />, run: true },
  { name: "System Monitor", icon: <Monitor />, run: true },
];

export default function App() {
  return (
    <Window>
      <GlobalStyle />
      <TitleBar>
        <PowerBi />
        dataleverager
        <WindowButtons>
          <button aria-label="Minimize"><Svg w={14} h={14}><path d="M1 7.500h12" stroke="#fff" /></Svg></button>
          <button aria-label="Restore"><Svg w={14} h={14}><path d="M4 4V2.500C4 1.500 4.500 1 5.500 1H11c1.500 0 2 .5 2 2v5.500c0 1-.5 1.500-1.500 1.500H10" stroke="#fff" /><rect x="1.500" y="4" width="8.500" height="8.500" rx="1.500" stroke="#fff" /></Svg></button>
          <button aria-label="Close"><Cross s={14} color="#fff" w={1.2} /></button>
        </WindowButtons>
      </TitleBar>
      <Tabs>
        {["Home", "Transform", "Add Column", "View", "Tools", "Help"].map((t) => <Tab key={t} $on={t === "Transform"}>{t}</Tab>)}
      </Tabs>

      <Ribbon>
        <Group>
          <GroupBody $pad={10}>
            <Big w={50} icon={<GroupByIcon />} a="Group" b="By" />
            <Big w={100} icon={<HeaderTable />} a="Use First Row" b="as Headers" caret />
            <SmallColumn $w={134} $pad={6}>
              <Small icon={<TransposeIcon />} label="Transpose" />
              <Small icon={<ReverseIcon />} label="Reverse Rows" />
              <Small icon={<CountIcon />} label="Count Rows" />
            </SmallColumn>
          </GroupBody>
          <GroupTitle>Table</GroupTitle>
        </Group>
        <Group>
          <GroupBody $pad={16}>
            <SmallColumn $w={233}>
              <Small label="Data Type: Decimal Number" caret />
              <Small icon={<DetectIcon />} label="Detect Data Type" />
              <Small icon={<RenameIcon />} label="Rename" />
            </SmallColumn>
            <SmallColumn $w={146}>
              <Small icon={<ReplaceIcon />} label="Replace Values" caret />
              <Small icon={<FillIcon />} label="Fill" caret />
              <Small icon={<PivotIcon />} label="Pivot Column" />
            </SmallColumn>
            <SmallColumn $w={165}>
              <Small icon={<PivotIcon flip />} label="Unpivot Columns" caret />
              <Small icon={<MoveIcon />} label="Move" caret />
              <Small icon={<ListColumnIcon />} label="Convert to List" />
            </SmallColumn>
          </GroupBody>
          <GroupTitle>Any Column</GroupTitle>
        </Group>
        <Group>
          <GroupBody $pad={12}>
            <Big w={68} icon={<SplitIcon />} a="Split" b="Column" caret />
            <Big w={62} icon={<FormatIcon />} a="Format" caret />
            <SmallColumn $w={148} $pad={4}>
              <Small icon={<MergeIcon />} label="Merge Columns" off />
              <Small icon={<ExtractIcon />} label="Extract" caret />
              <Small icon={<ParseIcon />} label="Parse" caret off />
            </SmallColumn>
          </GroupBody>
          <GroupTitle>Text Column</GroupTitle>
        </Group>
        <Group>
          <GroupBody $pad={9}>
            <Big w={68} icon={<StatsIcon />} a="Statistics" caret />
            <Big w={70} icon={<StandardIcon />} a="Standard" caret />
            <Big w={70} icon={<SciIcon />} a="Scientific" caret />
            <SmallColumn $w={145} $pad={5}>
              <Small icon={<TrigIcon />} label="Trigonometry" caret />
              <Small icon={<RoundIcon />} label="Rounding" caret />
              <Small icon={<InfoIcon />} label="Information" caret />
            </SmallColumn>
          </GroupBody>
          <GroupTitle>Number Column</GroupTitle>
        </Group>
        <Group>
          <GroupBody $pad={5}>
            <Big w={50} icon={<DateIcon />} a="Date" caret off />
            <Big w={52} icon={<TimeIcon />} a="Time" caret off />
            <Big w={74} icon={<DurationIcon />} a="Duration" caret off />
            <SmallColumn $w={6} />
          </GroupBody>
          <GroupTitle>Date &amp; Time Column</GroupTitle>
        </Group>
        <Group>
          <GroupBody $pad={8}>
            <Big w={50} icon={<Letters $color="#7b9fd0" $size={48} $weight={600}>R</Letters>} a="Run R" b="script" />
            <Big w={88} icon={<Letters $color="#1e90d2" $size={40} $weight={600}>Py</Letters>} a="Run Python" b="script" />
            <SmallColumn $w={8} />
          </GroupBody>
          <GroupTitle>Scripts</GroupTitle>
        </Group>
      </Ribbon>

      <Workspace>
        <QueriesPane>
          <PaneHead $left={19} $right={11}>
            <PaneTitle>Queries [12]</PaneTitle>
            <button aria-label="Collapse"><Svg w={10} h={14}><path d="M9 1L3 7l6 6" stroke="#fff" strokeWidth="2.600" /></Svg></button>
          </PaneHead>
          <Tree>
            {tree.map((t, i) => (
              <TreeRow key={i} $level={t.level} $on={t.on} $dim={t.dim} $fn={t.kind === "fn"}>
                <span>{t.kind === "folder" && <Triangle />}</span>
                {kindIcon[t.kind]}
                <TreeName>{t.name}</TreeName>
              </TreeRow>
            ))}
          </Tree>
        </QueriesPane>

        <Center>
          <FormulaRow>
            <FormulaTools>
              <button aria-label="Cancel"><Cross s={19} color="#7a7a7a" w={2.6} /></button>
              <button aria-label="Accept"><Svg w={18} h={16}><path d="M1 8l5 6L17 1" stroke="#7a7a7a" strokeWidth="3.200" /></Svg></button>
              <button aria-label="Insert step"><FxMark $color="#fff" $size={21}>fx</FxMark></button>
            </FormulaTools>
            <FormulaBox>
              <FormulaText role="textbox" aria-label="Formula" contentEditable suppressContentEditableWarning spellCheck={false}>
                {'= Table.Group(#"Added Conditional Column", {'}<Token $color="#ce8a6d">"CustomerID"</Token>{", "}<Token $color="#ce8a6d">"Product"</Token>{"}, {{"}<Token $color="#ce8a6d">"customer count"</Token>{", "}<Token $color="#4a93dd">each</Token>{" List.Sum([Quantity]), "}<Token $color="#4a93dd">type</Token>{" nullable "}<Token $color="#35c7a5">number</Token>{"}}"}
              </FormulaText>
              <ExpandButton aria-label="Expand formula bar"><Svg w={14} h={11}><path d="M1 2l6 6 6-6" stroke="#888" strokeWidth="2.800" /></Svg></ExpandButton>
            </FormulaBox>
          </FormulaRow>
          <GridArea>
            <GridClip>
              <Table>
                <thead>
                  <tr>
                    <Head $w={37}><HeadInner><Svg w={25} h={16}><path d="M4 0h16v15H4z" fill="#fff" /><path d="M4 0h16v4H4z" fill={c.blue} /><path d="M9.500 4v11M14.500 4v11M4 7.500h16M4 11.500h16" stroke="#aaa" /><path d="M22 12h7l-3.500 4z" fill="#777" /></Svg></HeadInner></Head>
                    <Head $w={201}><HeadInner><TextType />CustomerID<FilterButton aria-label="Filter CustomerID"><FilterMark /></FilterButton></HeadInner></Head>
                    <Head $w={207}><HeadInner><TextType />Product<FilterButton aria-label="Filter Product"><FilterMark /></FilterButton></HeadInner></Head>
                    <Head $w={201} $on><HeadInner><NumberType>1.2</NumberType>customer count<FilterButton $on aria-label="Filter customer count"><FilterMark /></FilterButton></HeadInner></Head>
                  </tr>
                </thead>
                <tbody>
                  <tr><Quality $color={c.dark} /><Quality $color={c.teal} /><Quality $color={c.teal} /><Quality $color={c.red} /></tr>
                  {rows.map(([id, product, n], i) => (
                    <BodyRow key={id}>
                      <RowNumber scope="row">{i + 1}</RowNumber>
                      <Cell>{id}</Cell>
                      <Cell>{product}</Cell>
                      <Cell $num>{n}</Cell>
                    </BodyRow>
                  ))}
                </tbody>
              </Table>
            </GridClip>
            <Track $top={33}>
              <ScrollArrow />
              <Thumb />
              <Gap $grow={1} />
              <ScrollArrow down />
            </Track>
          </GridArea>
        </Center>

        <Settings>
          <PaneHead $left={14} $right={32}>
            <PaneTitle>Query Settings</PaneTitle>
            <button aria-label="Close settings"><Cross s={15} color="#fff" w={1.3} /></button>
          </PaneHead>
          <SectionHead><Triangle />PROPERTIES</SectionHead>
          <Fields>
            <label htmlFor="query-name">Name</label>
            <NameInput id="query-name" defaultValue="sales" />
            <Link href="#all">All Properties</Link>
          </Fields>
          <SectionHead><Triangle />APPLIED STEPS</SectionHead>
          <StepsBox>
            <Steps>
              {steps.map(([name, gear], i) => (
                <Step key={i} $on={i === steps.length - 1}>
                  <DeleteSlot>{i === steps.length - 1 && <Cross s={13} color="#eee" w={2} />}</DeleteSlot>
                  {name}
                  {gear && <Gear hole={i === steps.length - 1 ? c.selected : c.panel} />}
                </Step>
              ))}
            </Steps>
            <Track $top={0}>
              <ScrollArrow />
              <Gap $grow={192} />
              <Thumb $grow={260} />
              <Gap $grow={12} />
              <ScrollArrow down />
            </Track>
          </StepsBox>
        </Settings>
      </Workspace>

      <StatusBar>
        <span>3 COLUMNS, 999+ ROWS</span>
        <span>Column profiling based on top 1000 rows</span>
        <StatusRight>PREVIEW DOWNLOADED AT 4:57 PM</StatusRight>
      </StatusBar>

      <Taskbar>
        <Weather><Cloud /><Stack $align="flex-start"><span>28°C</span><Dim>Cloudy</Dim></Stack></Weather>
        <Apps>
          <StartButton aria-label="Start"><WindowsLogo /></StartButton>
          <Search>
            <Svg w={19} h={20}><circle cx="8.500" cy="8.500" r="7" fill="#555" stroke="#e0e0e0" strokeWidth="2" /><path d="M13.500 14l4 5" stroke="#e0e0e0" strokeWidth="2.400" /></Svg>
            <SearchInput placeholder="Search web &amp; PC" aria-label="Search web and PC" />
            <SearchArt />
          </Search>
          {apps.map((a) => (
            <AppButton key={a.name} aria-label={a.name} $on={a.on}>
              {a.icon}
              {a.run && <Running $on={a.on} />}
              {a.badge && <ProfileBadge>{a.badge}</ProfileBadge>}
            </AppButton>
          ))}
        </Apps>
        <Tray>
          <button aria-label="Hidden icons"><Svg w={14} h={9}><path d="M1 8l6-6 6 6" stroke="#fff" strokeWidth="2" /></Svg></button>
          <Lang><Stack $align="center"><span>ENG</span><span>IN</span></Stack></Lang>
          <TrayIcons>
            <Svg w={20} h={15}><path d="M1 5.500a13 13 0 0 1 18 0M4 8.800a8.600 8.600 0 0 1 12 0M7 11.500a4.500 4.500 0 0 1 6 0" stroke="#fff" strokeWidth="1.500" /><circle cx="10" cy="13.500" r="1.500" fill="#fff" /></Svg>
            <Svg w={20} h={14}><path d="M1 4.500h3L8.500 1v12L4 9.500H1zM12 4l6 6M18 4l-6 6" stroke="#fff" strokeWidth="1.400" strokeLinejoin="round" /></Svg>
            <Svg w={20} h={17}><path d="M11 4.500h5a2 2 0 0 1 2 2v6a2 2 0 0 1-2 2H5" stroke="#fff" strokeWidth="1.500" /><path d="M19 8v3" stroke="#fff" strokeWidth="2" /><path d="M7 0c4 4 6 10 1 13H2C-1 9 1 6 7 0z" fill="#fff" /><path d="M3 12l5-6" stroke="#1c1c1c" /></Svg>
          </TrayIcons>
          <Clock><Stack $align="flex-end"><span>4:58 PM</span><span>8/25/2025</span></Stack></Clock>
          <button aria-label="Notifications"><Svg w={17} h={19}><path d="M0 15l2-3V7c0-8 12-8 12 0v5l2 3z" fill="#fff" /><path d="M5 17c1 2 5 2 6 0z" fill="#fff" stroke="#fff" /><path d="M5 6h4l-4 5h4" stroke="#1c1c1c" strokeWidth="1.300" /><path d="M12 1h4l-4 5h4" stroke="#fff" strokeWidth="1.300" /></Svg></button>
        </Tray>
      </Taskbar>
    </Window>
  );
}
